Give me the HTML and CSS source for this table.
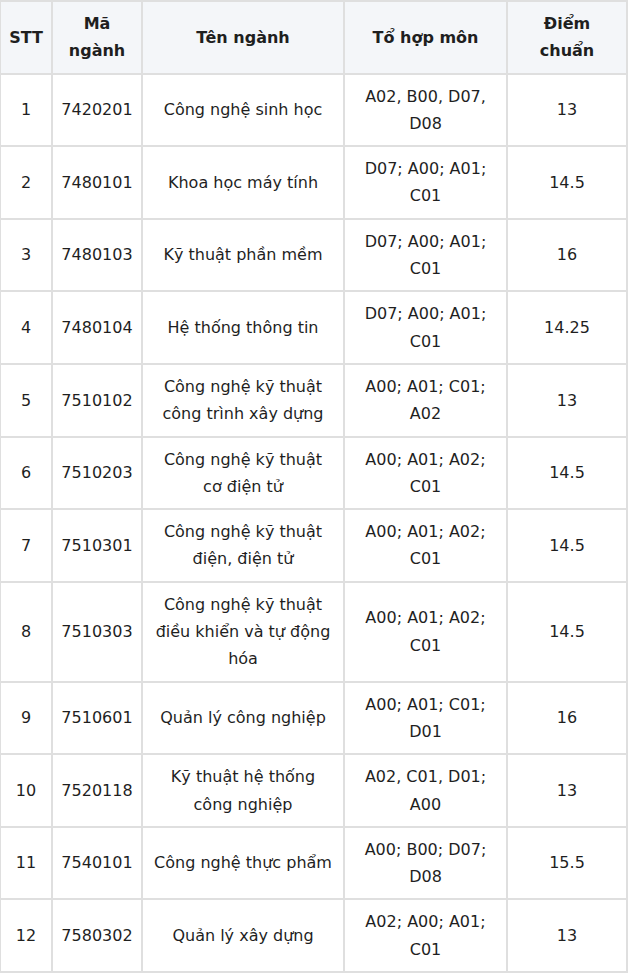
FILE: index.html
```html
<!DOCTYPE html>
<html lang="vi">
<head>
<meta charset="utf-8">
<title>Điểm chuẩn</title>
<link rel="stylesheet" href="styles.css">
</head>
<body>
<table class="scores">
  <colgroup>
    <col class="c-stt">
    <col class="c-ma">
    <col class="c-ten">
    <col class="c-to">
    <col class="c-diem">
  </colgroup>
  <thead>
    <tr>
      <th>STT</th>
      <th>Mã<br>ngành</th>
      <th>Tên ngành</th>
      <th>Tổ hợp môn</th>
      <th>Điểm<br>chuẩn</th>
    </tr>
  </thead>
  <tbody>
    <tr><td>1</td><td>7420201</td><td>Công nghệ sinh học</td><td>A02, B00, D07,<br>D08</td><td>13</td></tr>
    <tr><td>2</td><td>7480101</td><td>Khoa học máy tính</td><td>D07; A00; A01;<br>C01</td><td>14.5</td></tr>
    <tr><td>3</td><td>7480103</td><td>Kỹ thuật phần mềm</td><td>D07; A00; A01;<br>C01</td><td>16</td></tr>
    <tr><td>4</td><td>7480104</td><td>Hệ thống thông tin</td><td>D07; A00; A01;<br>C01</td><td>14.25</td></tr>
    <tr><td>5</td><td>7510102</td><td>Công nghệ kỹ thuật<br>công trình xây dựng</td><td>A00; A01; C01;<br>A02</td><td>13</td></tr>
    <tr><td>6</td><td>7510203</td><td>Công nghệ kỹ thuật<br>cơ điện tử</td><td>A00; A01; A02;<br>C01</td><td>14.5</td></tr>
    <tr><td>7</td><td>7510301</td><td>Công nghệ kỹ thuật<br>điện, điện tử</td><td>A00; A01; A02;<br>C01</td><td>14.5</td></tr>
    <tr><td>8</td><td>7510303</td><td>Công nghệ kỹ thuật<br>điều khiển và tự động<br>hóa</td><td>A00; A01; A02;<br>C01</td><td>14.5</td></tr>
    <tr><td>9</td><td>7510601</td><td>Quản lý công nghiệp</td><td>A00; A01; C01;<br>D01</td><td>16</td></tr>
    <tr><td>10</td><td>7520118</td><td>Kỹ thuật hệ thống<br>công nghiệp</td><td>A02, C01, D01;<br>A00</td><td>13</td></tr>
    <tr><td>11</td><td>7540101</td><td>Công nghệ thực phẩm</td><td>A00; B00; D07;<br>D08</td><td>15.5</td></tr>
    <tr><td>12</td><td>7580302</td><td>Quản lý xây dựng</td><td>A02; A00; A01;<br>C01</td><td>13</td></tr>
  </tbody>
</table>
</body>
</html>
```
FILE: styles.css
```css
html, body {
  margin: 0;
  padding: 0;
  background: #ffffff;
}

body {
  font-family: "DejaVu Sans", sans-serif;
  font-size: 16px;
  color: #1f1f1f;
}

.scores {
  border-collapse: collapse;
  table-layout: fixed;
  width: 627px;
  margin-left: -1px;
}

.c-stt { width: 52px; }
.c-ma { width: 90px; }
.c-ten { width: 202px; }
.c-to { width: 163px; }
.c-diem { width: 120px; }

.scores th,
.scores td {
  border: 2px solid #dfdfdf;
  padding: 8px 2px;
  line-height: 27.3px;
  text-align: center;
  vertical-align: middle;
}

.scores th {
  background: #f4f6f9;
  font-weight: bold;
}
```
